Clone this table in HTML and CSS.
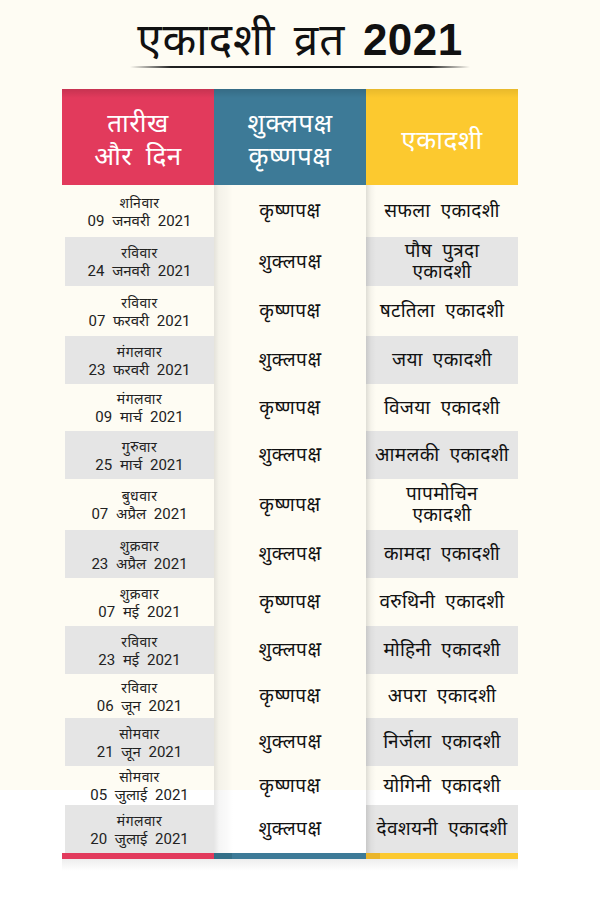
FILE: index.html
```html
<!DOCTYPE html>
<html lang="hi">
<head>
<meta charset="utf-8">
<title>एकादशी व्रत 2021</title>
<link rel="stylesheet" href="styles.css">
</head>
<body>
<div class="page">
  <h1 class="title"><span class="title-hi">एकादशी व्रत</span> <span class="title-year">2021</span></h1>
  <div class="rule"></div>
  <div class="table">
    <div class="hd hd-red"><span class="hd-text narrow">तारीख और दिन</span></div>
    <div class="hd hd-blue"><span class="hd-text narrow">शुक्लपक्ष कृष्णपक्ष</span></div>
    <div class="hd hd-yellow"><span class="hd-text">एकादशी</span></div>

    <div class="c-date"><span class="day">शनिवार</span><span class="date">09 जनवरी 2021</span></div>
    <div class="c-mid">कृष्णपक्ष</div>
    <div class="c-name">सफला एकादशी</div>

    <div class="c-date alt"><span class="day">रविवार</span><span class="date">24 जनवरी 2021</span></div>
    <div class="c-mid">शुक्लपक्ष</div>
    <div class="c-name alt"><span class="wrap">पौष पुत्रदा एकादशी</span></div>

    <div class="c-date"><span class="day">रविवार</span><span class="date">07 फरवरी 2021</span></div>
    <div class="c-mid">कृष्णपक्ष</div>
    <div class="c-name">षटतिला एकादशी</div>

    <div class="c-date alt"><span class="day">मंगलवार</span><span class="date">23 फरवरी 2021</span></div>
    <div class="c-mid">शुक्लपक्ष</div>
    <div class="c-name alt">जया एकादशी</div>

    <div class="c-date"><span class="day">मंगलवार</span><span class="date">09 मार्च 2021</span></div>
    <div class="c-mid">कृष्णपक्ष</div>
    <div class="c-name">विजया एकादशी</div>

    <div class="c-date alt"><span class="day">गुरुवार</span><span class="date">25 मार्च 2021</span></div>
    <div class="c-mid">शुक्लपक्ष</div>
    <div class="c-name alt">आमलकी एकादशी</div>

    <div class="c-date"><span class="day">बुधवार</span><span class="date">07 अप्रैल 2021</span></div>
    <div class="c-mid">कृष्णपक्ष</div>
    <div class="c-name"><span class="wrap">पापमोचिन एकादशी</span></div>

    <div class="c-date alt"><span class="day">शुक्रवार</span><span class="date">23 अप्रैल 2021</span></div>
    <div class="c-mid">शुक्लपक्ष</div>
    <div class="c-name alt">कामदा एकादशी</div>

    <div class="c-date"><span class="day">शुक्रवार</span><span class="date">07 मई 2021</span></div>
    <div class="c-mid">कृष्णपक्ष</div>
    <div class="c-name">वरुथिनी एकादशी</div>

    <div class="c-date alt"><span class="day">रविवार</span><span class="date">23 मई 2021</span></div>
    <div class="c-mid">शुक्लपक्ष</div>
    <div class="c-name alt">मोहिनी एकादशी</div>

    <div class="c-date"><span class="day">रविवार</span><span class="date">06 जून 2021</span></div>
    <div class="c-mid">कृष्णपक्ष</div>
    <div class="c-name">अपरा एकादशी</div>

    <div class="c-date alt"><span class="day">सोमवार</span><span class="date">21 जून 2021</span></div>
    <div class="c-mid">शुक्लपक्ष</div>
    <div class="c-name alt">निर्जला एकादशी</div>

    <div class="c-date"><span class="day">सोमवार</span><span class="date">05 जुलाई 2021</span></div>
    <div class="c-mid">कृष्णपक्ष</div>
    <div class="c-name">योगिनी एकादशी</div>

    <div class="c-date alt"><span class="day">मंगलवार</span><span class="date">20 जुलाई 2021</span></div>
    <div class="c-mid">शुक्लपक्ष</div>
    <div class="c-name alt">देवशयनी एकादशी</div>

    <div class="bar bar-red"></div>
    <div class="bar bar-blue"></div>
    <div class="bar bar-yellow"></div>
  </div>
</div>
</body>
</html>
```

FILE: styles.css
```css
* { box-sizing: border-box; }
html, body { margin: 0; padding: 0; }
body {
  width: 600px;
  min-height: 900px;
  background: linear-gradient(#fefcf3 0, #fefcf3 790px, #ffffff 790px);
  font-family: "Noto Sans", "Noto Sans Devanagari", "Lohit Devanagari", sans-serif;
  color: #111;
}
.page {
  padding-top: 13px;
}
.title {
  margin: 0;
  height: 50px;
  text-align: center;
  font-weight: 400;
  font-size: 44px;
  line-height: 50px;
  color: #111;
  white-space: nowrap;
  word-spacing: 6px;
}
.title-hi { font-weight: 400; letter-spacing: 1px; }
.title-year {
  font-family: "Liberation Sans", Arial, sans-serif;
  font-weight: 700;
  font-size: 44px;
  letter-spacing: 0.5px;
}
.rule {
  width: 340px;
  height: 2px;
  margin: 3px 0 0 130px;
  background: linear-gradient(90deg, rgba(0,0,0,0), #222 12%, #111 50%, #222 88%, rgba(0,0,0,0));
}
.table {
  margin: 21px 0 0 62px;
  width: 456px;
  display: grid;
  grid-template-columns: 152px 152px 152px;
  grid-template-rows: 96px 52px 49px 50px 48px 47px 48px 51px 48px 48px 48px 44px 48px 39px 48px 6px;
  position: relative;
}
.table::after {
  content: "";
  position: absolute;
  left: 0; right: 0;
  bottom: -12px;
  height: 12px;
  background: linear-gradient(rgba(0,0,0,0.07), rgba(0,0,0,0));
}
.hd {
  display: flex;
  align-items: center;
  justify-content: center;
  text-align: center;
  color: #fff;
  font-size: 26px;
  line-height: 33px;
  padding-top: 4px;
  word-spacing: 6px;
  letter-spacing: 0.5px;
}
.hd-text.narrow { max-width: 112px; }
.hd-red { background: linear-gradient(rgba(0,0,0,0.12), rgba(0,0,0,0) 9px), #e23a5c; }
.hd-blue { background: linear-gradient(rgba(0,0,0,0.12), rgba(0,0,0,0) 9px), #3d7a97; }
.hd-yellow { background: linear-gradient(rgba(0,0,0,0.08), rgba(0,0,0,0) 9px), #fcc92f; }

.c-date {
  margin-left: 3px;
  display: flex;
  flex-direction: column;
  align-items: center;
  justify-content: center;
  text-align: center;
  padding-top: 2px;
}
.day {
  font-size: 14px;
  line-height: 18px;
  letter-spacing: 0.5px;
  color: #222;
}
.date {
  font-family: "Roboto", "Noto Sans", "Noto Sans Devanagari", sans-serif;
  font-size: 15px;
  line-height: 19px;
  word-spacing: 4px;
  color: #222;
}
.c-mid {
  display: flex;
  align-items: center;
  justify-content: center;
  font-size: 19px;
  letter-spacing: 0.5px;
  color: #111;
  padding-bottom: 2px;
  background: linear-gradient(90deg, rgba(0,0,0,0.10), rgba(0,0,0,0.04) 5px, rgba(0,0,0,0.02) 14px, rgba(0,0,0,0) 19px);
}
.c-name {
  display: flex;
  align-items: center;
  justify-content: center;
  text-align: center;
  font-size: 19px;
  line-height: 22px;
  word-spacing: 5px;
  letter-spacing: 0.3px;
  color: #111;
  padding-bottom: 2px;
  background: linear-gradient(90deg, rgba(0,0,0,0.12), rgba(0,0,0,0.03) 5px, rgba(0,0,0,0) 10px);
}
.c-name .wrap {
  display: block;
  max-width: 112px;
  line-height: 21px;
}
.c-date.alt { background: #e5e5e5; }
.c-name.alt {
  background: linear-gradient(90deg, rgba(0,0,0,0.12), rgba(0,0,0,0.03) 5px, rgba(0,0,0,0) 10px), #e5e5e5;
}
.bar-red { background: #e23a5c; }
.bar-blue { background: linear-gradient(90deg, #346f88 0, #346f88 18px, #3d7a97 18px); }
.bar-yellow { background: linear-gradient(90deg, #eab52a 0, #eab52a 14px, #fcc92f 14px); }
```
